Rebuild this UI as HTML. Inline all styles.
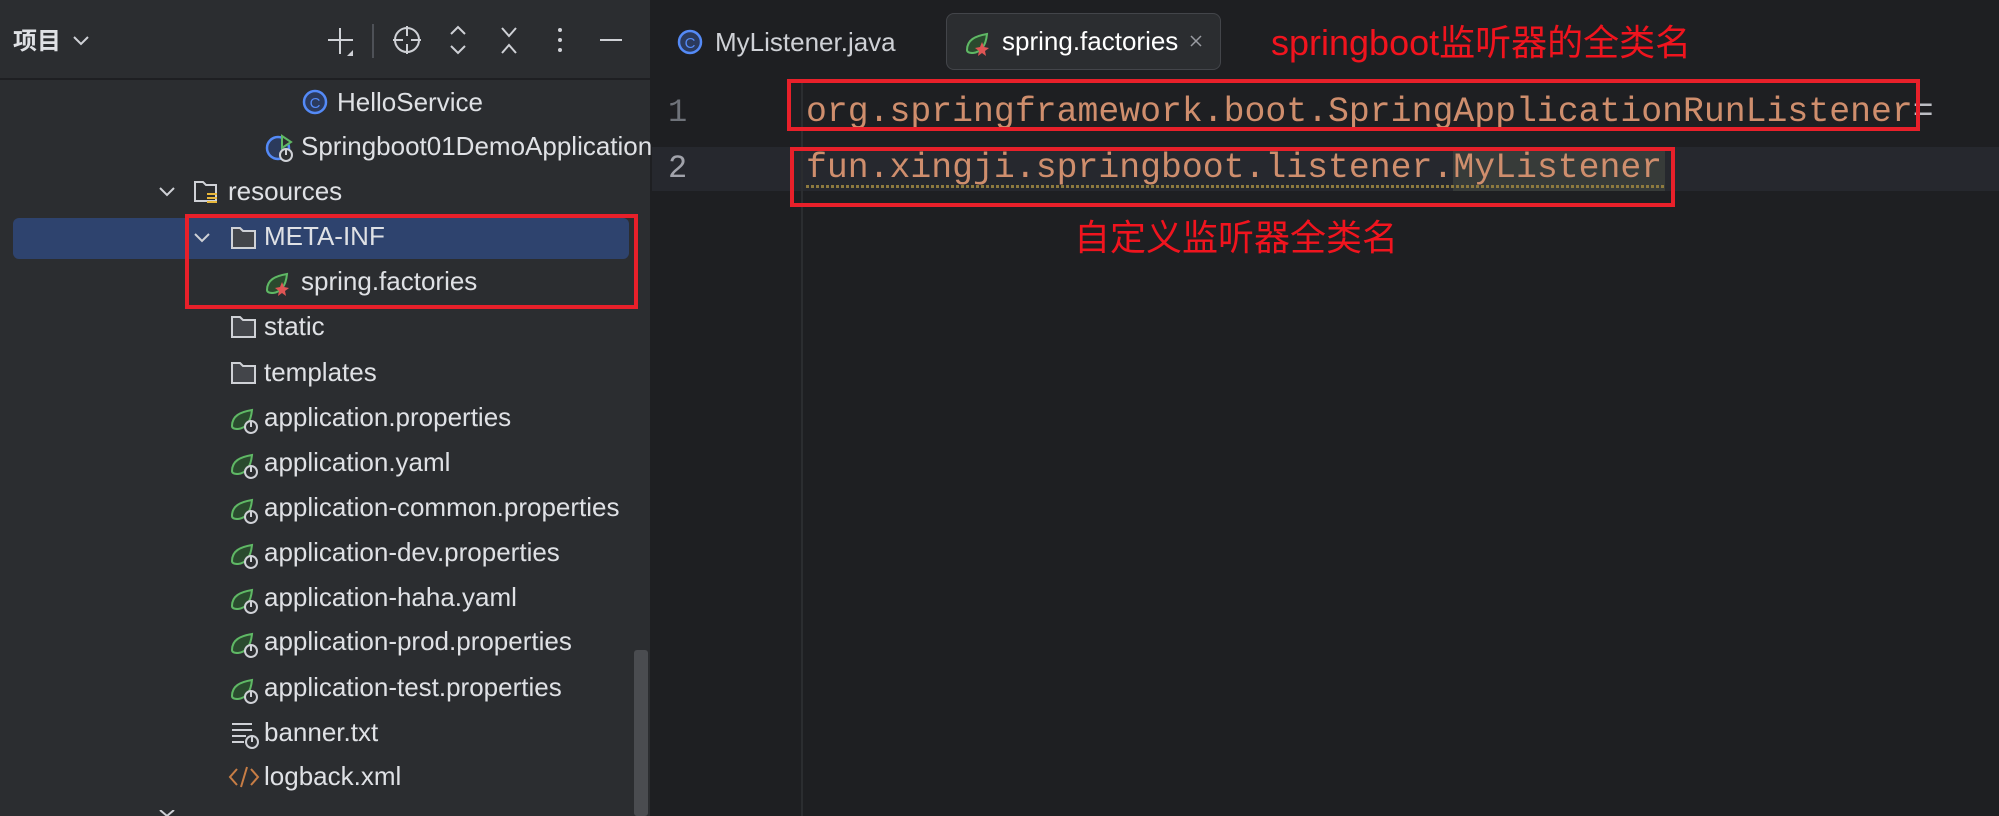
<!DOCTYPE html>
<html><head><meta charset="utf-8">
<style>
*{margin:0;padding:0;box-sizing:border-box}
body{width:1999px;height:816px;overflow:hidden;background:#1e1f22;position:relative;font-family:"Segoe UI","Liberation Sans","Noto Sans CJK SC",sans-serif}
.abs{position:absolute}
#left{left:0;top:0;width:650px;height:816px;background:#2b2d30}
.t{position:absolute;color:#dfe1e5;font-size:26px;line-height:45px;white-space:nowrap}
.ic{position:absolute}
.code{position:absolute;font-family:"Liberation Mono",monospace;font-size:34.8px;color:#cf8e6d;line-height:45px;white-space:pre}
.red{position:absolute;border:4px solid #e8202a}
.ann{position:absolute;color:#f0141e;font-size:36px;line-height:45px;white-space:nowrap;font-family:"Liberation Sans","Noto Sans CJK SC",sans-serif}
</style></head><body>
<div id="left" class="abs"></div>
<div class="abs" style="left:0;top:78px;width:650px;height:2px;background:#1e1f22"></div>
<div class="abs" style="left:650px;top:0;width:2px;height:816px;background:#1e1f22"></div>
<!-- header -->
<div class="t" style="left:13px;top:19px;font-weight:bold;font-size:24px;font-family:'Liberation Sans','Noto Sans CJK SC',sans-serif">项目</div>
<svg class="ic" style="left:72px;top:33px" width="18" height="14"><path d="M2 4l7 7 7-7" stroke="#cfd1d6" stroke-width="2" fill="none"/></svg>
<svg class="ic" style="left:320px;top:20px" width="340" height="42" fill="none" stroke="#cfd1d6" stroke-width="2">
<path d="M20 8v26M8 20h25"/><path d="M33 30v6h-6z" fill="#cfd1d6" stroke="none"/>
<path d="M53 4v34" stroke="#4e5157"/>
<circle cx="87" cy="20" r="12"/><path d="M87 6v10M87 24v10M73 20h10M91 20h10"/>
<path d="M131 14l7-7 7 7M131 26l7 7 7-7"/>
<path d="M182 8l7 8 7-8M182 33l7-8 7 8"/>
<circle cx="240" cy="10" r="2" fill="#cfd1d6" stroke="none"/><circle cx="240" cy="20" r="2" fill="#cfd1d6" stroke="none"/><circle cx="240" cy="30" r="2" fill="#cfd1d6" stroke="none"/>
<path d="M280 20h22"/>
</svg>
<!-- selection -->
<div class="abs" style="left:13px;top:218px;width:616px;height:41px;background:#2e436e;border-radius:6px"></div>
<!-- tree -->
<svg class="ic" style="left:302px;top:89px" width="26" height="26"><circle cx="13" cy="13" r="11" fill="#2b3a5c" stroke="#548af7" stroke-width="2.5"/><text x="13" y="19" font-size="15" text-anchor="middle" fill="#548af7" font-family="Liberation Sans">C</text></svg>
<div class="t" style="left:337px;top:80px">HelloService</div>
<svg class="ic" style="left:265px;top:133px" width="30" height="30"><circle cx="13" cy="15" r="11" fill="#2b3a5c" stroke="#548af7" stroke-width="2.5"/><path d="M17 3l9 6-9 6z" fill="#2b2d30" stroke="#5fb865" stroke-width="2"/><circle cx="21" cy="22" r="6" fill="#2b2d30" stroke="#cfd1d6" stroke-width="2"/><path d="M21 17v5" stroke="#cfd1d6" stroke-width="2"/></svg>
<div class="t" style="left:301px;top:124px">Springboot01DemoApplication</div>
<svg class="ic" style="left:158px;top:184px" width="18" height="14"><path d="M2 4l7 7 7-7" stroke="#cfd1d6" stroke-width="2" fill="none"/></svg>
<svg class="ic" style="left:193px;top:178px" width="30" height="28"><path d="M2 4h8l3 3h10v16H2z" fill="none" stroke="#cfd1d6" stroke-width="2"/><path d="M14 16h10M14 20h10M14 24h10" stroke="#e8b73a" stroke-width="2"/></svg>
<div class="t" style="left:228px;top:169px">resources</div>
<svg class="ic" style="left:193px;top:230px" width="18" height="14"><path d="M2 4l7 7 7-7" stroke="#cfd1d6" stroke-width="2" fill="none"/></svg>
<svg class="ic" style="left:230px;top:225px" width="28" height="26"><path d="M2 3h8l3 3h12v17H2z" fill="#43454a" stroke="#cfd1d6" stroke-width="2"/></svg>
<div class="t" style="left:264px;top:214px">META-INF</div>
<svg class="ic" style="left:264px;top:268px" width="30" height="30"><path d="M3 22c0-10 8-14 20-16-1 10-5 18-14 19-4 0-6-1-6-3z" fill="#2a4a2e" stroke="#5fb865" stroke-width="2"/><path d="M18 14l2 5 5 1-4 3 1 5-4-3-4 3 1-5-4-3 5-1z" fill="#e05555"/></svg>
<div class="t" style="left:301px;top:259px">spring.factories</div>
<div id="tree2"></div>
<svg class="ic" style="left:230px;top:314px" width="28" height="26"><path d="M2 3h8l3 3h12v17H2z" fill="#43454a" stroke="#cfd1d6" stroke-width="2"/></svg>
<div class="t" style="left:264px;top:304px">static</div>
<svg class="ic" style="left:230px;top:360px" width="28" height="26"><path d="M2 3h8l3 3h12v17H2z" fill="#43454a" stroke="#cfd1d6" stroke-width="2"/></svg>
<div class="t" style="left:264px;top:350px">templates</div>

<svg width="0" height="0" style="position:absolute"><defs><g id="sp"><path d="M3 22c0-10 8-14 20-16-1 10-5 18-14 19-4 0-6-1-6-3z" fill="#2a4a2e" stroke="#5fb865" stroke-width="2"/><circle cx="22" cy="23" r="6" fill="#2b2d30" stroke="#cfd1d6" stroke-width="2"/><path d="M22 17v6" stroke="#cfd1d6" stroke-width="2"/></g></defs></svg>
<svg class="ic" style="left:229px;top:404px" width="32" height="32"><use href="#sp"/></svg><div class="t" style="left:264px;top:395px">application.properties</div>
<svg class="ic" style="left:229px;top:449px" width="32" height="32"><use href="#sp"/></svg><div class="t" style="left:264px;top:440px">application.yaml</div>
<svg class="ic" style="left:229px;top:494px" width="32" height="32"><use href="#sp"/></svg><div class="t" style="left:264px;top:485px">application-common.properties</div>
<svg class="ic" style="left:229px;top:539px" width="32" height="32"><use href="#sp"/></svg><div class="t" style="left:264px;top:530px">application-dev.properties</div>
<svg class="ic" style="left:229px;top:584px" width="32" height="32"><use href="#sp"/></svg><div class="t" style="left:264px;top:575px">application-haha.yaml</div>
<svg class="ic" style="left:229px;top:628px" width="32" height="32"><use href="#sp"/></svg><div class="t" style="left:264px;top:619px">application-prod.properties</div>
<svg class="ic" style="left:229px;top:674px" width="32" height="32"><use href="#sp"/></svg><div class="t" style="left:264px;top:665px">application-test.properties</div>
<svg class="ic" style="left:230px;top:720px" width="32" height="30"><path d="M2 4h20M2 10h20M2 16h14M2 22h12" stroke="#cfd1d6" stroke-width="2"/><circle cx="22" cy="22" r="6" fill="#2b2d30" stroke="#cfd1d6" stroke-width="2"/><path d="M22 16v6" stroke="#cfd1d6" stroke-width="2"/></svg><div class="t" style="left:264px;top:710px">banner.txt</div>
<svg class="ic" style="left:228px;top:764px" width="32" height="26"><path d="M9 5l-7 8 7 8M23 5l7 8-7 8M19 3l-6 20" stroke="#c77d45" stroke-width="2" fill="none"/></svg><div class="t" style="left:264px;top:754px">logback.xml</div>
<svg class="ic" style="left:158px;top:810px" width="18" height="6"><path d="M2 0l7 6 7-6" stroke="#cfd1d6" stroke-width="2" fill="none"/></svg>
<!-- scrollbar -->
<div class="abs" style="left:634px;top:650px;width:14px;height:166px;background:#4a4c50;border-radius:3px"></div>

<!-- red box left -->
<div class="red" style="left:185px;top:214px;width:453px;height:95px"></div>

<!-- tabs -->
<svg class="ic" style="left:677px;top:29px" width="26" height="26"><circle cx="13" cy="13" r="11" fill="#2b3a5c" stroke="#548af7" stroke-width="2.5"/><text x="13" y="19" font-size="15" text-anchor="middle" fill="#548af7" font-family="Liberation Sans">C</text></svg>
<div class="t" style="left:715px;top:20px;color:#cfd1d6">MyListener.java</div>
<div class="abs" style="left:946px;top:13px;width:275px;height:57px;background:#2b2d30;border:1px solid #43454a;border-radius:8px"></div>
<svg class="ic" style="left:964px;top:28px" width="30" height="30"><path d="M3 22c0-10 8-14 20-16-1 10-5 18-14 19-4 0-6-1-6-3z" fill="#2a4a2e" stroke="#5fb865" stroke-width="2"/><path d="M18 14l2 5 5 1-4 3 1 5-4-3-4 3 1-5-4-3 5-1z" fill="#e05555"/></svg>
<div class="t" style="left:1002px;top:19px;color:#fff">spring.factories</div>
<svg class="ic" style="left:1189px;top:34px" width="14" height="14"><path d="M2 2l10 10M12 2L2 12" stroke="#9a9ca2" stroke-width="1.5"/></svg>
<div class="ann" style="left:1271px;top:20px">springboot监听器的全类名</div>

<!-- editor -->
<div class="abs" style="left:652px;top:147px;width:1347px;height:44px;background:#26282e"></div>
<div class="abs" style="left:801px;top:79px;width:2px;height:737px;background:#2b2d30"></div>
<div class="abs" style="left:1453px;top:147px;width:212px;height:44px;background:#373b39"></div>
<div class="t" style="left:668px;top:90px;color:#6f737a;font-family:'Liberation Mono',monospace;font-size:32px">1</div>
<div class="t" style="left:668px;top:146px;color:#a1a3ab;font-family:'Liberation Mono',monospace;font-size:32px">2</div>
<div class="code" style="left:806px;top:90px">org.springframework.boot.SpringApplicationRunListener<span style="color:#bcbec4">=</span></div>
<div class="code" style="left:806px;top:146px">fun.xingji.springboot.listener.MyListener</div>
<div class="abs" style="left:806px;top:185px;width:859px;height:3px;background:repeating-linear-gradient(90deg,#8d7a3f 0 3px,transparent 3px 5px)"></div>
<div class="red" style="left:787px;top:79px;width:1133px;height:52px"></div>
<div class="red" style="left:790px;top:147px;width:885px;height:60px"></div>
<div class="ann" style="left:1074px;top:215px">自定义监听器全类名</div>
</body></html>
